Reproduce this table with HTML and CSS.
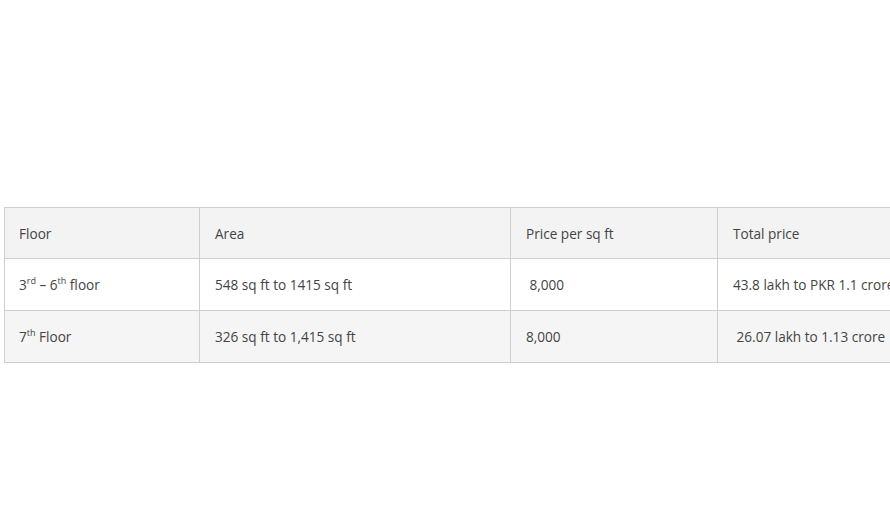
FILE: index.html
```html
<!DOCTYPE html>
<html>
<head>
<meta charset="utf-8">
<link rel="stylesheet" href="styles.css">
</head>
<body>
<div class="page">
  <table class="prices">
    <colgroup>
      <col class="c1"><col class="c2"><col class="c3"><col class="c4">
    </colgroup>
    <tr class="head">
      <td>Floor</td>
      <td>Area</td>
      <td>Price per sq ft</td>
      <td>Total price</td>
    </tr>
    <tr class="odd">
      <td>3<sup>rd</sup> – 6<sup>th</sup> floor</td>
      <td>548 sq ft to 1415 sq ft</td>
      <td>&nbsp;8,000</td>
      <td>43.8 lakh to PKR 1.1 crore</td>
    </tr>
    <tr class="even">
      <td>7<sup>th</sup> Floor</td>
      <td>326 sq ft to 1,415 sq ft</td>
      <td>8,000</td>
      <td>&nbsp;26.07 lakh to 1.13 crore</td>
    </tr>
  </table>
</div>
</body>
</html>
```

FILE: styles.css
```css
html, body {
  margin: 0;
  background: #fff;
  overflow: hidden;
}
.page {
  width: 890px;
  height: 527px;
  padding: 207px 0 0 4px;
  box-sizing: border-box;
  overflow: hidden;
}
.prices {
  border-collapse: collapse;
  table-layout: fixed;
  width: 930px;
  font-family: "Open Sans", "Noto Sans", sans-serif;
  font-size: 13.6px;
  color: #444;
}
.c1 { width: 195px; }
.c2 { width: 311px; }
.c3 { width: 207px; }
.c4 { width: 217px; }
.prices td {
  border: 1px solid #cfcfcf;
  height: 51px;
  padding: 0 0 0 15px;
  white-space: nowrap;
  vertical-align: middle;
}
.prices td:first-child { padding-left: 14px; }
.head td { background: #f3f3f3; height: 50px; }
.odd td { background: #fff; }
.even td { background: #f5f5f5; }
sup {
  font-size: 9px;
  line-height: 0;
  vertical-align: 6px;
}
```
